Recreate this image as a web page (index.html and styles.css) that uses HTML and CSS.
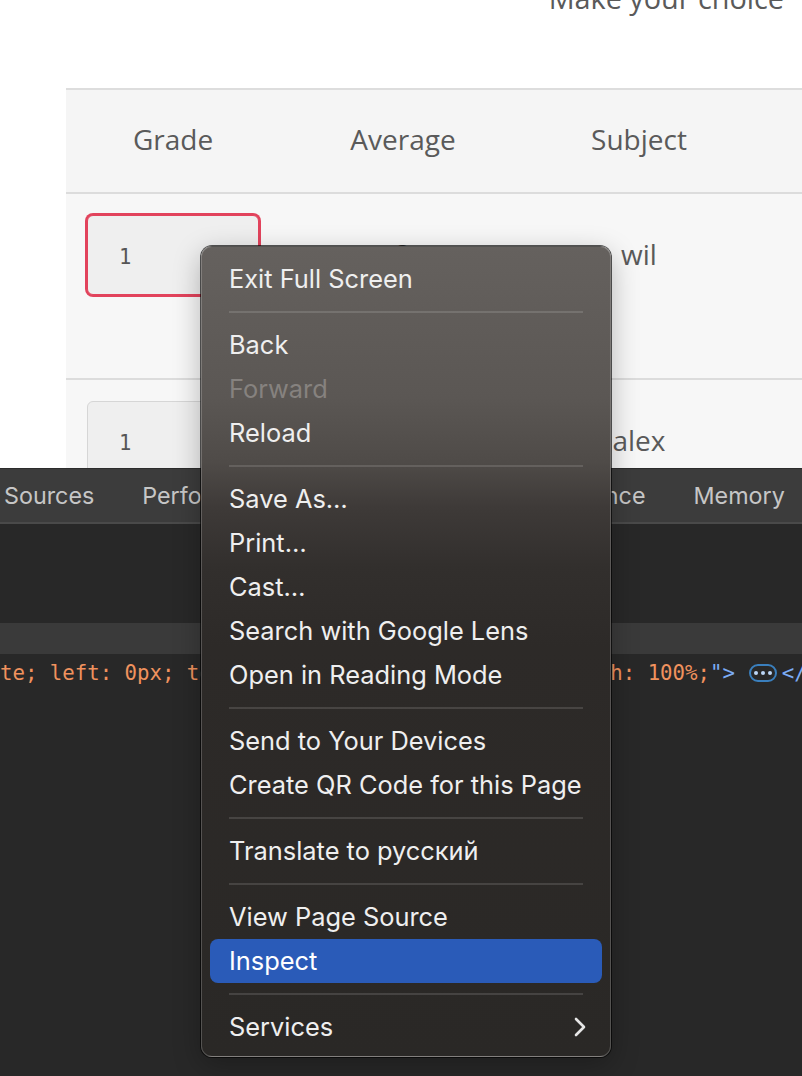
FILE: index.html
```html
<!DOCTYPE html>
<html lang="en">
<head>
<meta charset="utf-8">
<title>Make your choice</title>
<link rel="stylesheet" href="styles.css">
</head>
<body>
<div class="page">
  <h1 class="title">Make your choice</h1>
  <div class="table">
    <div class="row head">
      <div class="cell">Grade</div>
      <div class="cell">Average</div>
      <div class="cell">Subject</div>
      <div class="cell"></div>
    </div>
    <div class="row body">
      <div class="cell"><div class="inp err">1</div></div>
      <div class="cell"><span class="val">2</span></div>
      <div class="cell"><span class="val">wil</span></div>
      <div class="cell"></div>
    </div>
    <div class="row body">
      <div class="cell"><div class="inp">1</div></div>
      <div class="cell"><span class="val">2</span></div>
      <div class="cell"><span class="val">alex</span></div>
      <div class="cell"></div>
    </div>
  </div>
</div>

<div class="devtools">
  <div class="tabs">
    <span class="tab">Sources</span>
    <span class="tab">Performance</span>
    <span class="tab">Lighthouse</span>
    <span class="tab">Performance</span>
    <span class="tab">Memory</span>
  </div>
  <div class="panel"></div>
  <div class="band"></div>
  <div class="code"><span class="attr">te; left: 0px; top: 0px; bottom: 0px; gap:0; width: 100%;</span><span class="tag">"&gt;</span><span class="pill"><i></i><i></i><i></i></span><span class="tag">&lt;/div&gt;</span></div>
</div>

<div class="menu">
  <div class="item">Exit Full Screen</div>
  <div class="sep"></div>
  <div class="item">Back</div>
  <div class="item disabled">Forward</div>
  <div class="item">Reload</div>
  <div class="sep"></div>
  <div class="item">Save As…</div>
  <div class="item">Print…</div>
  <div class="item">Cast…</div>
  <div class="item">Search with Google Lens</div>
  <div class="item">Open in Reading Mode</div>
  <div class="sep"></div>
  <div class="item">Send to Your Devices</div>
  <div class="item">Create QR Code for this Page</div>
  <div class="sep"></div>
  <div class="item">Translate to русский</div>
  <div class="sep"></div>
  <div class="item">View Page Source</div>
  <div class="item active">Inspect</div>
  <div class="sep"></div>
  <div class="item sub">Services
    <svg class="chev" width="12" height="20" viewBox="0 0 12 20"><path d="M2 2 L10 10 L2 18" fill="none" stroke="#e6e6e6" stroke-width="2.6" stroke-linecap="round" stroke-linejoin="round"/></svg>
  </div>
</div>
</body>
</html>
```

FILE: styles.css
```css
html, body {
  margin: 0;
  padding: 0;
}
body {
  width: 802px;
  height: 1076px;
  overflow: hidden;
  background: #ffffff;
  display: flex;
  flex-direction: column;
  position: relative;
}

.page {
  height: 468px;
  overflow: hidden;
  flex: none;
  font-family: "Open Sans", "Liberation Sans", sans-serif;
  color: #5a5a5a;
}
.title {
  margin: -16px 18px 76px 0;
  font-size: 28.8px;
  line-height: 28px;
  font-weight: 400;
  text-align: right;
  color: #5a5a5a;
}
.table {
  margin-left: 66px;
  border-top: 2px solid #dddddd;
  background: #f6f6f6;
}
.row {
  display: grid;
  grid-template-columns: 214px 246px 226px 1fr;
  border-bottom: 2px solid #dcdcdc;
}
.row.head {
  height: 102px;
  align-items: center;
  background: #f5f5f5;
}
.row.head .cell {
  text-align: center;
  font-size: 28px;
  padding-bottom: 4px;
}
.row.body {
  height: 184px;
  background: #f7f7f7;
}
.row.body .cell {
  padding-top: 21px;
  display: flex;
  justify-content: center;
  align-items: flex-start;
}
.val {
  font-size: 28px;
  line-height: 78px;
}
.inp {
  box-sizing: border-box;
  width: 172px;
  height: 80px;
  border: 1px solid #d6d6d6;
  border-radius: 6px;
  background: #efefef;
  font-family: "DejaVu Sans Mono", "Liberation Mono", monospace;
  font-size: 20.5px;
  line-height: 82px;
  padding-left: 31px;
  color: #555555;
}
.inp.err {
  border-color: #e2435c;
  box-shadow: 0 0 0 2px #e2435c;
}

.devtools {
  flex: 1;
  background: #282828;
  display: flex;
  flex-direction: column;
  font-family: "Inter", "Noto Sans", sans-serif;
}
.tabs {
  height: 53px;
  flex: none;
  border-top: 1px solid #2c2c2c;
  border-bottom: 2px solid #4a4a4a;
  background: #3c3c3c;
  display: flex;
  align-items: center;
  gap: 48px;
  padding-left: 4px;
  white-space: nowrap;
  overflow: hidden;
}
.tab {
  font-size: 23.3px;
  color: #c6c6c6;
}
.panel {
  height: 99px;
  flex: none;
  background: #282828;
}
.band {
  height: 31px;
  flex: none;
  background: #3a3a3a;
}
.code {
  height: 38px;
  display: flex;
  align-items: center;
  white-space: nowrap;
  font-family: "DejaVu Sans Mono", "Liberation Mono", monospace;
  font-size: 20.7px;
  overflow: hidden;
}
.attr { color: #f0925e; }
.tag { color: #7cacf5; }
.pill {
  flex: none;
  box-sizing: border-box;
  width: 28px;
  height: 18px;
  margin: 0 5px 0 14px;
  border: 2px solid #3a7fbd;
  border-radius: 9px;
  display: inline-flex;
  align-items: center;
  justify-content: center;
  gap: 3px;
}
.pill i {
  width: 4px;
  height: 4px;
  border-radius: 50%;
  background: #bcd6f6;
}

.menu {
  position: absolute;
  left: 201px;
  top: 246px;
  width: 410px;
  box-sizing: border-box;
  padding: 10px 8px 7px;
  border: 1px solid rgba(255, 255, 255, 0.2);
  border-radius: 11px;
  background: linear-gradient(180deg, #65615e 0px, #5b5754 150px, #4f4b48 215px, #3e3a38 260px, #322f2d 320px, #2d2a28 400px, #2a2826 100%);
  box-shadow: 0 0 0 1px rgba(0, 0, 0, 0.65), 0 8px 28px rgba(0, 0, 0, 0.28);
  font-family: "Inter", "Noto Sans", sans-serif;
  font-size: 25.4px;
  color: #efefef;
}
.item {
  height: 44px;
  line-height: 44px;
  padding: 0 19px;
  border-radius: 8px;
  white-space: nowrap;
  display: flex;
  align-items: center;
  justify-content: space-between;
}
.item.disabled { color: #86827f; }
.item.active {
  background: #2a5bb8;
  color: #ffffff;
}
.sep {
  height: 2px;
  margin: 10px 19px;
  background: rgba(255, 255, 255, 0.13);
}
.chev {
  margin-right: -3px;
}
```
